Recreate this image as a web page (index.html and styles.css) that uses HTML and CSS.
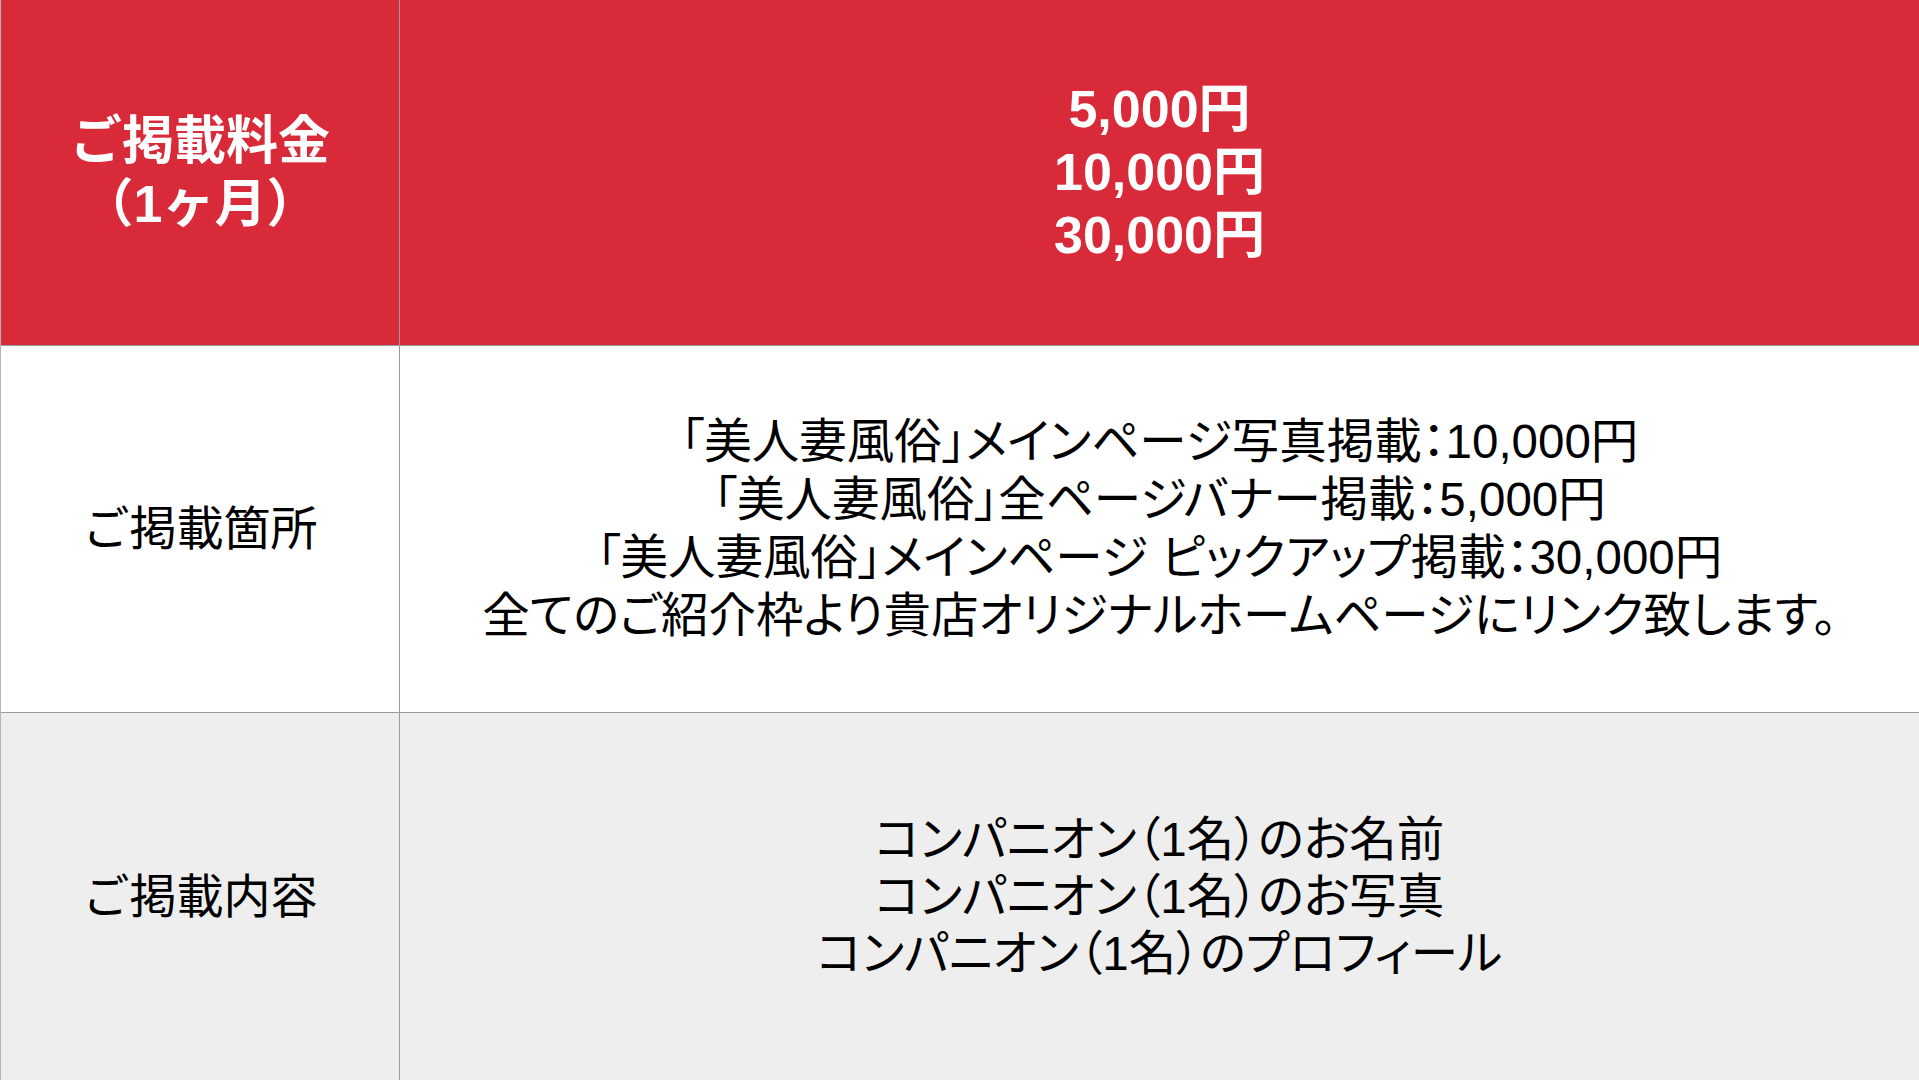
FILE: index.html
```html
<!DOCTYPE html>
<html lang="ja">
<head>
<meta charset="utf-8">
<title>ご掲載料金</title>
<link rel="stylesheet" href="styles.css">
</head>
<body>
<div class="table">
  <div class="cell head label-head">ご掲載料金<br>（1ヶ月）</div>
  <div class="cell head prices">5,000円<br>10,000円<br>30,000円</div>
  <div class="cell label">ご掲載箇所</div>
  <div class="cell body places">「美人妻風俗」メインページ写真掲載：10,000円<br>「美人妻風俗」全ページバナー掲載：5,000円<br>「美人妻風俗」メインページ ピックアップ掲載：30,000円<br>全てのご紹介枠より貴店オリジナルホームページにリンク致します。</div>
  <div class="cell label grey">ご掲載内容</div>
  <div class="cell body grey contents">コンパニオン（1名）のお名前<br>コンパニオン（1名）のお写真<br>コンパニオン（1名）のプロフィール</div>
</div>
</body>
</html>
```
FILE: styles.css
```css
html, body {
  margin: 0;
  padding: 0;
}
body {
  font-family: "Liberation Sans", "Noto Sans CJK JP", sans-serif;
  color: #000;
  background: #fff;
}
.table {
  display: grid;
  grid-template-columns: 398px 1fr;
  grid-template-rows: 345px 366px 1fr;
  gap: 1px;
  background: #9a9a9a;
  border-left: 1px solid #b5b5b5;
  height: 1080px;
  box-sizing: border-box;
}
.cell {
  display: flex;
  align-items: center;
  justify-content: center;
  text-align: center;
  background: #fff;
}
.head {
  background: #d92a3a;
  color: #fff;
  font-weight: bold;
  font-size: 52px;
  line-height: 63px;
}
.label {
  font-size: 47px;
  line-height: 58px;
}
.body {
  font-size: 47.5px;
  line-height: 58px;
  font-feature-settings: "palt" 1;
}
.contents {
  line-height: 57px;
}
.grey {
  background: #eeeeee;
}
```
